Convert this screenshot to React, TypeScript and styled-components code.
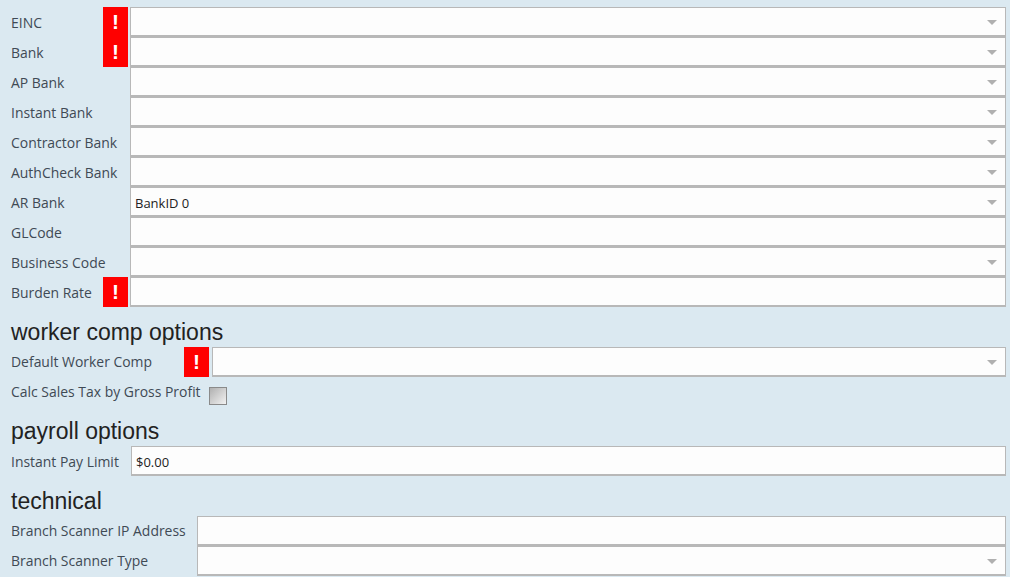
import React from "react";
import styled, { createGlobalStyle } from "styled-components";

const Global = createGlobalStyle`
  html, body { margin: 0; padding: 0; background: #dbe9f1; }
  body { width: 1010px; height: 577px; overflow: hidden; font-family: "Open Sans", "Liberation Sans", sans-serif; }
`;

const Page = styled.div`
  display: flex;
  flex-direction: column;
  padding: 7px 4px 0 11px;
`;

const Row = styled.div`
  display: flex;
  align-items: stretch;
  height: 30px;
`;

const Label = styled.div<{ $w: number; $tight?: boolean }>`
  width: ${(p) => p.$w}px;
  flex: none;
  font-size: 13.95px;
  line-height: ${(p) => (p.$tight ? 29 : 31)}px;
  color: #3f4a55;
  white-space: nowrap;
`;

const WarnSlot = styled.div`
  flex: none;
  width: 0;
  position: relative;
`;

const Warn = styled.div<{ $gap: number }>`
  position: absolute;
  right: ${(p) => p.$gap}px;
  top: 0;
  width: 25px;
  height: 30px;
  background: #ff0000;
  color: #fff;
  font: bold 21px/30px "Liberation Sans", sans-serif;
  text-align: center;
`;

const Field = styled.div`
  flex: 1;
  position: relative;
  box-sizing: border-box;
  background: #fdfdfd;
  border-style: solid;
  border-color: #b8b8b8;
  border-width: 1px 1px 2px 1px;
  font-size: 13px;
  line-height: 30px;
  color: #222;
  padding-left: 4px;
`;

const Arrow = styled.div`
  position: absolute;
  right: 8px;
  top: 12px;
  width: 0;
  height: 0;
  border-left: 5px solid transparent;
  border-right: 5px solid transparent;
  border-top: 5px solid #b0b0b0;
`;

const Heading = styled.h2<{ $top: number; $bottom: number }>`
  margin: ${(p) => p.$top}px 0 ${(p) => p.$bottom}px;
  font: 400 23px/24px "Liberation Sans", sans-serif;
  color: #222;
`;

const CheckRow = styled.div`
  display: flex;
  align-items: flex-start;
  height: 30px;
`;

const Check = styled.div`
  width: 18px;
  height: 18px;
  box-sizing: border-box;
  margin: 10px 0 0 9px;
  border: 1px solid #8a8a8a;
  background: linear-gradient(135deg, #b0b0b0, #f2f2f2);
`;

type F = { label: string; w?: number; warn?: boolean; gap?: number; select?: boolean; value?: string; tight?: boolean };

const FieldRow = ({ label, w = 119, warn, gap = 2, select, value, tight }: F) => (
  <Row>
    <Label $w={w} $tight={tight}>{label}</Label>
    <WarnSlot>{warn && <Warn $gap={gap}>!</Warn>}</WarnSlot>
    <Field>
      {value}
      {select && <Arrow />}
    </Field>
  </Row>
);

export default function App() {
  return (
    <Page>
      <Global />
      <FieldRow label="EINC" warn select />
      <FieldRow label="Bank" warn select />
      <FieldRow label="AP Bank" select />
      <FieldRow label="Instant Bank" select />
      <FieldRow label="Contractor Bank" select />
      <FieldRow label="AuthCheck Bank" select />
      <FieldRow label="AR Bank" select value="BankID 0" />
      <FieldRow label="GLCode" />
      <FieldRow label="Business Code" select />
      <FieldRow label="Burden Rate" warn />
      <Heading $top={13} $bottom={3}>worker comp options</Heading>
      <FieldRow label="Default Worker Comp" w={201} gap={3} warn select tight />
      <CheckRow>
        <Label $w={189} $tight>Calc Sales Tax by Gross Profit</Label>
        <Check />
      </CheckRow>
      <Heading $top={12} $bottom={3}>payroll options</Heading>
      <FieldRow label="Instant Pay Limit" w={120} value="$0.00" />
      <Heading $top={13} $bottom={3}>technical</Heading>
      <FieldRow label="Branch Scanner IP Address" w={186} tight />
      <FieldRow label="Branch Scanner Type" w={186} select tight />
    </Page>
  );
}
